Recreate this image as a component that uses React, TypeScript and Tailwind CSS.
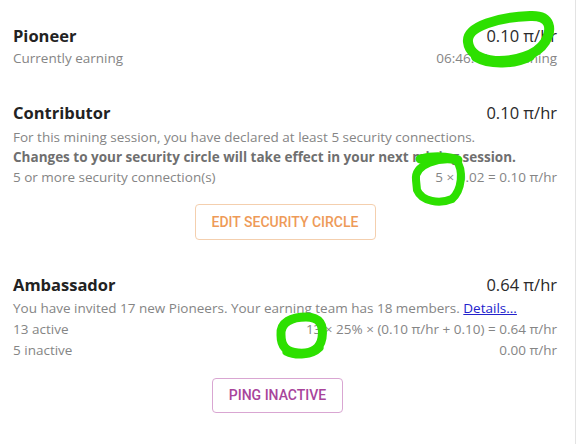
const body = { fontFamily: '"Open Sans", "Noto Sans", sans-serif' };
const btn = { fontFamily: 'Roboto, "Noto Sans", sans-serif' };

const Marks = () => (
  <svg
    className="pointer-events-none absolute left-0 top-0"
    width={577}
    height={444}
    viewBox="0 0 577 444"
    fill="none"
    stroke="#2de000"
    strokeLinecap="round"
    strokeLinejoin="round"
  >
    <path
      d="M468 42 C466 26 500 17 530 16 C552 15 552 30 545 42 C537 55 515 62 495 61 C478 59 469 52 468 42 Z"
      strokeWidth={10}
    />
    <path d="M476 57 C490 65 515 64 530 56" strokeWidth={10} />
    <path
      d="M416 180 C414 164 440 157 456 160 C464 170 462 190 452 199 C440 204 422 202 417 190 Z"
      strokeWidth={8}
    />
    <path d="M420 159 C432 156 448 156 458 160" strokeWidth={9} />
    <path
      d="M281 335 C280 322 292 317 306 317 C320 317 324 325 322 338 C320 350 310 354 298 353 C286 352 281 346 281 335 Z"
      strokeWidth={9}
    />
    <path d="M286 352 C296 357 312 356 320 348" strokeWidth={7} />
  </svg>
);

const Row = ({ left, right, className = "" }: { left: React.ReactNode; right?: React.ReactNode; className?: string }) => (
  <div className={`flex justify-between text-[13.5px] leading-[20px] text-[#858585] ${className}`}>
    <span>{left}</span>
    {right && <span>{right}</span>}
  </div>
);

const Head = ({ title, value }: { title: string; value: string }) => (
  <div className="flex items-baseline justify-between leading-[24px]">
    <span className="text-[16.5px] font-bold text-[#222]">{title}</span>
    <span className="text-[16.5px] text-[#2a2a2a]">{value}</span>
  </div>
);

export default function App() {
  return (
    <div className="relative h-[444px] w-[577px] overflow-hidden bg-white" style={body}>
      <div className="h-full w-[576px] border-r border-[#e3e3e3] pl-[13px] pr-[18px] pt-[24px]">
        {/* pioneer */}
        <Head title="Pioneer" value="0.10 π/hr" />
        <Row left="Currently earning" right="06:46:41 remaining" />

        {/* contributor */}
        <div className="mt-[33px]">
          <Head title="Contributor" value="0.10 π/hr" />
          <div className="mt-[2px]">
            <Row left="For this mining session, you have declared at least 5 security connections." />
            <Row
              left={<b className="font-bold text-[#6f6f6f]">Changes to your security circle will take effect in your next mining session.</b>}
            />
            <Row left="5 or more security connection(s)" right="5 × 0.02 = 0.10 π/hr" />
          </div>
          <div className="mt-[17px] flex justify-center">
            <button
              className="h-[36px] w-[181px] rounded-[4px] border border-[#f4cfae] text-[14px] font-medium text-[#ee9a58]"
              style={btn}
            >
              EDIT SECURITY CIRCLE
            </button>
          </div>
        </div>

        {/* ambassador */}
        <div className="mt-[33px]">
          <Head title="Ambassador" value="0.64 π/hr" />
          <div className="mt-[1px] [&>div]:leading-[21px]">
            <Row
              left={
                <>
                  You have invited 17 new Pioneers. Your earning team has 18 members.{" "}
                  <a className="text-[#2222cc] underline">Details...</a>
                </>
              }
            />
            <Row left="13 active" right="13 × 25% × (0.10 π/hr + 0.10) = 0.64 π/hr" />
            <Row left="5 inactive" right="0.00 π/hr" />
          </div>
          <div className="mt-[17px] pl-[199px]">
            <button
              className="h-[35px] w-[131px] rounded-[4px] border border-[#d9a6d2] text-[14px] font-medium text-[#a8449b]"
              style={btn}
            >
              PING INACTIVE
            </button>
          </div>
        </div>
      </div>
      <Marks />
    </div>
  );
}
